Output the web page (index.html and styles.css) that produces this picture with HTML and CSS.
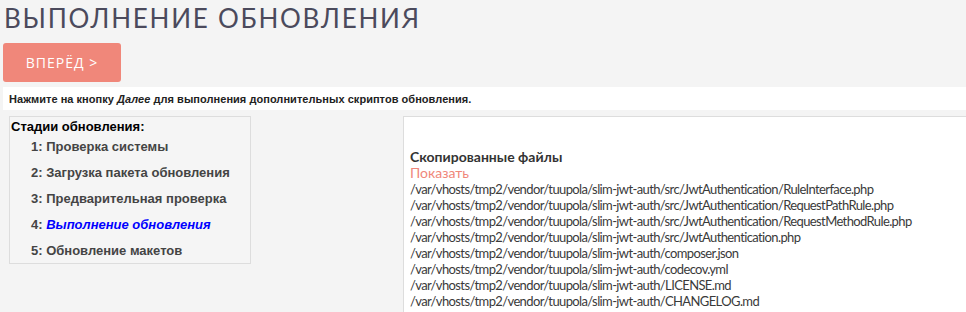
FILE: index.html
```html
<!DOCTYPE html>
<html lang="ru">

<head>
    <meta charset="UTF-8">
    <title>Выполнение обновления</title>
    <link rel="stylesheet" href="styles.css">
</head>

<body>
    <div class="page">
        <h1 class="page-title">Выполнение обновления</h1>
        <button class="next-button" type="button">Вперёд &gt;</button>

        <div class="notice">Нажмите на кнопку <i>Далее</i> для выполнения дополнительных скриптов обновления.</div>

        <div class="update-layout">
            <div class="stages">
                <div class="stages-title">Стадии обновления:</div>
                <ul class="stage-list">
                    <li>1: Проверка системы</li>
                    <li>2: Загрузка пакета обновления</li>
                    <li>3: Предварительная проверка</li>
                    <li>4: <span class="current">Выполнение обновления</span></li>
                    <li>5: Обновление макетов</li>
                </ul>
            </div>

            <div class="log">
                <div class="log-title">Скопированные файлы</div>
                <a class="log-toggle" href="#">Показать</a>
                <div class="log-files">
                    <div>/var/vhosts/tmp2/vendor/tuupola/slim-jwt-auth/src/JwtAuthentication/RuleInterface.php</div>
                    <div>/var/vhosts/tmp2/vendor/tuupola/slim-jwt-auth/src/JwtAuthentication/RequestPathRule.php</div>
                    <div>/var/vhosts/tmp2/vendor/tuupola/slim-jwt-auth/src/JwtAuthentication/RequestMethodRule.php</div>
                    <div>/var/vhosts/tmp2/vendor/tuupola/slim-jwt-auth/src/JwtAuthentication.php</div>
                    <div>/var/vhosts/tmp2/vendor/tuupola/slim-jwt-auth/composer.json</div>
                    <div>/var/vhosts/tmp2/vendor/tuupola/slim-jwt-auth/codecov.yml</div>
                    <div>/var/vhosts/tmp2/vendor/tuupola/slim-jwt-auth/LICENSE.md</div>
                    <div>/var/vhosts/tmp2/vendor/tuupola/slim-jwt-auth/CHANGELOG.md</div>
                </div>
            </div>
        </div>
    </div>
</body>

</html>
```

FILE: styles.css
```css
html,
body {
    margin: 0;
    padding: 0;
    height: 100%;
    background-color: #f4f4f4;
    overflow: hidden;
}

.page {
    padding: 0 0 0 3px;
}

.page-title {
    margin: 0;
    padding: 2px 0 0 1px;
    height: 41px;
    font-family: Lato, sans-serif;
    font-weight: 400;
    font-size: 26px;
    line-height: 32px;
    letter-spacing: 1.75px;
    text-transform: uppercase;
    color: #4b4a5c;
}

.next-button {
    display: block;
    width: 118px;
    height: 39px;
    padding: 0 0 1px;
    border: none;
    border-radius: 3px;
    background-color: #f0877a;
    color: #fff;
    font-family: "Open Sans", sans-serif;
    font-size: 14px;
    letter-spacing: 1px;
    text-transform: uppercase;
    cursor: pointer;
}

.notice {
    margin-top: 5px;
    height: 23px;
    padding-left: 6px;
    background-color: #fff;
    font-family: "Liberation Sans", sans-serif;
    font-weight: bold;
    font-size: 11px;
    line-height: 24px;
    letter-spacing: 0.04px;
    color: #222;
}

.update-layout {
    display: flex;
    align-items: flex-start;
    margin-top: 6px;
}

.stages {
    width: 240px;
    margin-left: 6px;
    border: 1px solid #ddd;
    background-color: #f5f5f5;
    font-family: "Liberation Sans", sans-serif;
    font-weight: bold;
    font-size: 13px;
}

.stages-title {
    padding: 2px 0 0 1px;
    line-height: 15px;
    color: #000;
}

.stage-list {
    list-style: none;
    margin: 0;
    padding: 0 0 0 21px;
}

.stage-list li {
    line-height: 26px;
    color: #444;
}

.stage-list li:last-child {
    line-height: 25px;
}

.stage-list .current {
    color: #0000ff;
    font-style: italic;
}

.log {
    flex: 1;
    margin-left: 152px;
    height: 300px;
    padding: 32px 0 0 6px;
    border-top: 1px solid #ddd;
    border-left: 1px solid #ddd;
    background-color: #fff;
    font-family: Lato, sans-serif;
    font-size: 13px;
    line-height: 16px;
    color: #333;
    white-space: nowrap;
}

.log-title {
    font-weight: bold;
    font-size: 14px;
    color: #333;
}

.log-toggle {
    display: block;
    color: #f0877a;
    font-size: 14px;
    text-decoration: none;
}

.log-files {
    letter-spacing: -0.62px;
    color: #3a3a3a;
}
```
